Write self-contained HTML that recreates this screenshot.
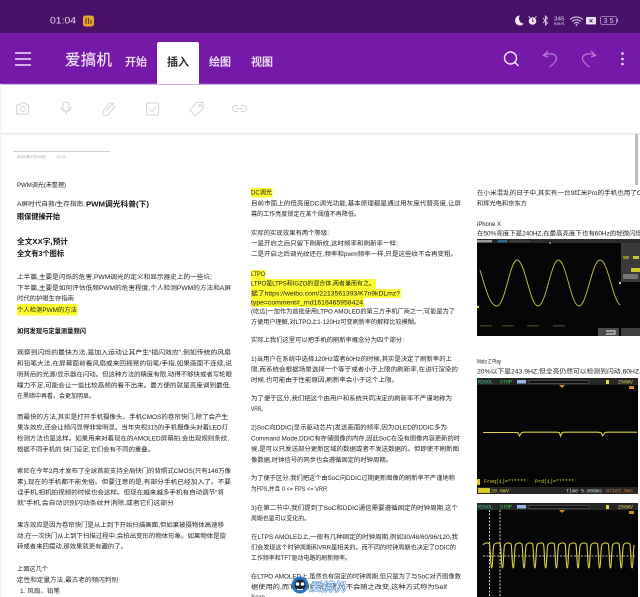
<!DOCTYPE html>
<html lang="zh"><head><meta charset="utf-8"><title>爱搞机</title>
<style>
html,body{margin:0;padding:0;background:#fff;width:640px;height:597px;overflow:hidden}
svg{display:block;font-family:"Liberation Sans","Noto Sans CJK SC",sans-serif}
.t text{font-size:6.1px;fill:#1c1c1c}
.t .b{font-size:7.2px;font-weight:700;fill:#111}
.t{filter:blur(.25px)}
.s text{font-size:5px;font-family:"Liberation Mono","Noto Sans CJK SC",monospace}
.h{stroke:currentColor;stroke-width:.15px}
</style></head><body>
<svg width="640" height="597" viewBox="0 0 640 597" xmlns="http://www.w3.org/2000/svg">
<rect width="640" height="597" fill="#fff"/>
<!-- header -->
<rect width="640" height="33" fill="#4a1168"/>
<rect y="33" width="640" height="51" fill="#7519a8"/>
<rect y="83.5" width="640" height="1" fill="#a45cd0"/>
<path d="M157 84V44q0-2 2-2h38q2 0 2 2v40z" fill="#fff"/>
<text x="50" y="23.5" font-size="9.5" fill="#eadcf2" textLength="26" lengthAdjust="spacingAndGlyphs">01:04</text>
<rect x="83" y="15.5" width="11" height="11" rx="2.5" fill="#e9a532"/>
<path d="M86 18v6M88.5 18v6M91 20v4" stroke="#6a4410" stroke-width="1.2" fill="none"/>
<!-- status right -->
<path d="M520 15.500a5 5 0 1 0 4 8a5 5 0 0 1-4-8z" fill="#f0e6f5"/>
<circle cx="532.500" cy="21" r="3.800" fill="#f0e6f5"/><path d="M532.500 18.800v2.400h1.500" stroke="#4a1168" stroke-width=".8" fill="none"/><path d="M528.500 16.500l1.500 1M536.500 16.500l-1.500 1" stroke="#f0e6f5" stroke-width="1"/>
<path d="M543 18l4.500 5-2 2v-9l2 2-4.500 5" stroke="#e6d8ee" stroke-width=".9" fill="none"/>
<text x="554" y="20.500" font-size="5.600" fill="#e6d8ee" textLength="10.500" lengthAdjust="spacingAndGlyphs">345</text>
<text x="554" y="25" font-size="3.800" fill="#e6d8ee" textLength="10.500" lengthAdjust="spacingAndGlyphs">KB/S</text>
<path d="M570 19.500q6.500-5 13 0M572 21.500q4.500-3.500 9 0M574 23.500q2.500-2 5 0" stroke="#e6d8ee" stroke-width="1" fill="none"/><circle cx="576.500" cy="25" r=".9" fill="#e6d8ee"/>
<rect x="586" y="17" width="10" height="7.500" rx="1" fill="#ece2f2"/><path d="M589.500 19.300l3 3M592.500 19.300l-3 3" stroke="#4a1168" stroke-width=".9"/>
<rect x="600.500" y="16.500" width="16" height="8" rx="2" fill="none" stroke="#b79cc8" stroke-width=".8"/><rect x="617" y="19" width="1" height="3" fill="#b79cc8"/>
<text x="603.500" y="23" font-size="7" fill="#ddccea" textLength="10">35</text>
<!-- toolbar -->
<path d="M15 53h16M15 59h16M15 65h16" stroke="#f0e4f6" stroke-width="1.500"/>
<text class="h" x="65" y="65" font-size="15.500" fill="#f2e8f7" color="#f2e8f7" textLength="47">爱搞机</text>
<text class="h" x="125" y="65.300" font-size="11" fill="#efe3f6" color="#efe3f6" font-weight="500">开始</text>
<text class="h" x="167" y="65.300" font-size="11" fill="#222" color="#222" font-weight="500">插入</text>
<text class="h" x="209" y="65.300" font-size="11" fill="#efe3f6" color="#efe3f6" font-weight="500">绘图</text>
<text class="h" x="251" y="65.300" font-size="11" fill="#efe3f6" color="#efe3f6" font-weight="500">视图</text>
<circle cx="510.500" cy="58" r="6" fill="none" stroke="#f5edf9" stroke-width="1.400"/><path d="M515 62.500l3.500 3.500" stroke="#f5edf9" stroke-width="1.500"/>
<path d="M548 51l-4.500 4.500 4.500 1.500M544 55.500c5-3 12-2 12.500 2.500c.3 3-3 6-7 9" fill="none" stroke="#b678d6" stroke-width="1.300"/>
<path d="M591 51l4.500 4.500-4.500 1.500M595 55.500c-5-3-12-2-12.500 2.500c-.3 3 3 6 7 9" fill="none" stroke="#b678d6" stroke-width="1.300"/>
<circle cx="622.500" cy="53.500" r="1.300" fill="#f0e4f6"/><circle cx="622.500" cy="59" r="1.300" fill="#f0e4f6"/><circle cx="622.500" cy="64" r="1.300" fill="#f0e4f6"/>
<!-- insert bar -->
<rect y="133" width="640" height="1.500" fill="#e9e9e9"/>
<rect x="0" y="84" width="1.500" height="513" fill="#f3f3f3"/>
<g fill="none" stroke="#d6d6d6" stroke-width="1.100">
<path d="M17 105h3l1.500-2h4l1.500 2h1.500v9h-12z"/><circle cx="23" cy="109" r="2.500"/>
<rect x="63" y="102" width="6" height="9" rx="3"/><path d="M61 107c0 6 10 6 10 0M66 112v2.500"/>
<path d="M114 104c-2-2-4-1-5 0l-5 6c-2 2-1 4 0 5s3 1 4.500-.5l5-6c1-1 1-2 0-3s-2-.5-3 .5l-4 5"/>
<rect x="146.500" y="103" width="12" height="12" rx="1"/><path d="M149.500 109l2.500 2.500 4-4.500"/>
<path d="M197 102.500h6v6l-7.500 7.500-6-6z"/><circle cx="200" cy="105.500" r="1"/>
<path d="M238 105.500h-2.500a3 3 0 0 0 0 6h2.500M241 105.500h2.500a3 3 0 0 1 0 6h-2.500M236.500 108.500h6.500"/>
</g>
<rect x="635" y="134" width="3" height="51" fill="#bdbdbd"/>
<!-- doc head -->
<rect x="13" y="151" width="97" height=".7" fill="#bbb"/>
<text x="17" y="158" font-size="3.500" fill="#999" textLength="29" lengthAdjust="spacingAndGlyphs">2020年7月10日</text>
<text x="56" y="158" font-size="3.500" fill="#aaa" textLength="10" lengthAdjust="spacingAndGlyphs">10:31</text>
<!-- highlights -->
<g fill="#fdfb2f">
<rect x="17" y="304" width="60.500" height="11.500"/>
<rect x="251" y="188" width="21.500" height="9.500"/>
<rect x="251" y="270" width="14.500" height="9"/>
<rect x="251" y="279" width="125" height="10"/>
<rect x="251" y="289" width="150" height="9"/>
<rect x="251" y="298" width="113" height="9"/>
</g>
<g class="t">
<text x="17" y="187.200" textLength="49" lengthAdjust="spacingAndGlyphs">PWM调光(未整理)</text>
<text x="17" y="206.200" textLength="68" lengthAdjust="spacingAndGlyphs">A屏时代自救/生存指南,</text>
<text class="b" x="86" y="206.600" textLength="63" lengthAdjust="spacingAndGlyphs">PWM调光科普(下)</text>
<text class="b" x="17" y="219.100" textLength="43" lengthAdjust="spacingAndGlyphs">眼保健操开始</text>
<text class="b" x="17" y="244.100" textLength="51" lengthAdjust="spacingAndGlyphs">全文XX字,预计</text>
<text class="b" x="17" y="256.100" textLength="47" lengthAdjust="spacingAndGlyphs">全文有3个图标</text>
<text x="17" y="279.200" textLength="195" lengthAdjust="spacingAndGlyphs">上半篇,主要是闪烁的危害,PWM调光的定义和显示器史上的一些坑;</text>
<text x="17" y="290.200" textLength="214" lengthAdjust="spacingAndGlyphs">下半篇,主要是如何评估低频PWM的危害程度,个人检测PWM的方法和A屏</text>
<text x="17" y="300.700" textLength="57" lengthAdjust="spacingAndGlyphs">时代的护眼生存指南</text>
<text x="17" y="312.200" textLength="60" lengthAdjust="spacingAndGlyphs">个人检测PWM的方法</text>
<text class="b" style="font-size:6.300px" x="17" y="333.200" textLength="69" lengthAdjust="spacingAndGlyphs">如何发现与定量测量频闪</text>
<text x="17" y="354.700" textLength="214" lengthAdjust="spacingAndGlyphs">观察到闪烁的最快方法,是加入运动让其产生“插闪效应”,例如传统的风扇</text>
<text x="17" y="365.700" textLength="215" lengthAdjust="spacingAndGlyphs">和铅笔大法,在屏幕面前看风扇或来回摇晃的铅笔/手指,如果画面不连续,说</text>
<text x="17" y="376.700" textLength="215" lengthAdjust="spacingAndGlyphs">明背后的光源/显示器在闪动。但这种方法的精度有限,动得不够快或者写轮眼</text>
<text x="17" y="387.700" textLength="214" lengthAdjust="spacingAndGlyphs">瞳力不足,可能会让一些比较高频的看不出来。最方便的就是亮度调到最低,</text>
<text x="17" y="398.200" textLength="78" lengthAdjust="spacingAndGlyphs">在黑暗中再看。会更加明显。</text>
<text x="17" y="419.200" textLength="211" lengthAdjust="spacingAndGlyphs">而最快的方法,其实是打开手机摄像头。手机CMOS的卷帘快门,除了会产生</text>
<text x="17" y="429.700" textLength="211" lengthAdjust="spacingAndGlyphs">果冻效应,还会让频闪显得非常明显。当年央视315的手机摄像头对着LED灯</text>
<text x="17" y="440.700" textLength="212" lengthAdjust="spacingAndGlyphs">检测方法也是这样。如果用来对着现在的AMOLED屏幕拍,会出现规则条纹,</text>
<text x="17" y="451.700" textLength="137" lengthAdjust="spacingAndGlyphs">根据不同手机的 快门设定,它们会有不同的重叠。</text>
<text x="17" y="473.200" textLength="214" lengthAdjust="spacingAndGlyphs">索尼在今年2月才发布了全球首款支持全局快门的背照式CMOS(只有146万像</text>
<text x="17" y="484.200" textLength="214" lengthAdjust="spacingAndGlyphs">素),现在的手机都不能免俗。但要注意的是,有部分手机已经加入了。不要</text>
<text x="17" y="494.700" textLength="207" lengthAdjust="spacingAndGlyphs">误手机,相机拍视频的时候也会这样。但现在越来越多手机有自动调节“将</text>
<text x="17" y="505.200" textLength="157" lengthAdjust="spacingAndGlyphs">就”手机,会自动识别闪动条纹并消除,或者它们这部分</text>
<text x="17" y="527.200" textLength="207" lengthAdjust="spacingAndGlyphs">果冻效应是因为卷帘快门是从上到下开始扫描画面,但如果被摄物体高速移</text>
<text x="17" y="538.200" textLength="209" lengthAdjust="spacingAndGlyphs">动,在一次快门从上到下扫描过程中,会拍出变形的物体形象。如果物体是旋</text>
<text x="17" y="548.700" textLength="110" lengthAdjust="spacingAndGlyphs">转或者来回摆动,那效果就更有趣的了。</text>
<text x="17" y="571.200" textLength="31" lengthAdjust="spacingAndGlyphs">上面这几个</text>
<text x="17" y="582.200" textLength="101" lengthAdjust="spacingAndGlyphs">定性和定量方法,最古老的频闪判别</text>
<text x="20" y="593.200" textLength="40" lengthAdjust="spacingAndGlyphs">1. 风扇、铅笔</text>

<text x="251" y="194.700" textLength="21" lengthAdjust="spacingAndGlyphs">DC调光</text>
<text x="251" y="205.700" textLength="210" lengthAdjust="spacingAndGlyphs">目前市面上的低亮度DC调光功能,基本原理都是通过用灰度代替亮度,让屏</text>
<text x="251" y="216.200" textLength="109" lengthAdjust="spacingAndGlyphs">幕的工作亮度锁定在某个阈值不再降低。</text>
<text x="251" y="235.200" textLength="78" lengthAdjust="spacingAndGlyphs">实际的实现效果有两个等级:</text>
<text x="251" y="245.700" textLength="147" lengthAdjust="spacingAndGlyphs">一是开启之后只留下刷新纹,这时频率和刷新率一样;</text>
<text x="251" y="256.200" textLength="206" lengthAdjust="spacingAndGlyphs">二是开启之后调光纹还在,频率和pwm频率一样,只是这些纹不会再变粗。</text>
<text x="251" y="276.200" textLength="14" lengthAdjust="spacingAndGlyphs">LTPO</text>
<text x="251" y="285.700" textLength="124" lengthAdjust="spacingAndGlyphs">LTPO是LTPS和IGZO的混合体,两者兼而有之。</text>
<text x="251" y="295.700" textLength="149" lengthAdjust="spacingAndGlyphs">据了https://weibo.com/2213561393/K7n9kDLmz?</text>
<text x="251" y="304.700" textLength="112" lengthAdjust="spacingAndGlyphs">type=comment#_rnd1616465958424</text>
<text x="251" y="313.700" textLength="204" lengthAdjust="spacingAndGlyphs">(吃瓜)一加作为首批使用LTPO AMOLED的第三方手机厂商之一,可能是为了</text>
<text x="251" y="324.200" textLength="169" lengthAdjust="spacingAndGlyphs">方便用户理解,对LTPO上1-120Hz可变刷新率的解释比较模糊。</text>
<text x="251" y="342.200" textLength="153" lengthAdjust="spacingAndGlyphs">实际上我们这里可以把手机的刷新率概念分为四个部分:</text>
<text x="251" y="361.200" textLength="201" lengthAdjust="spacingAndGlyphs">1)当用户在系统中选择120Hz或者60Hz的时候,其实是决定了刷新率的上</text>
<text x="251" y="371.700" textLength="207" lengthAdjust="spacingAndGlyphs">限,而系统会根据场景选择一个等于或者小于上限的刷新率,在进行渲染的</text>
<text x="251" y="382.200" textLength="147" lengthAdjust="spacingAndGlyphs">时候,也可能由于性能原因,刷新率会小于这个上限。</text>
<text x="251" y="400.700" textLength="201" lengthAdjust="spacingAndGlyphs">为了便于区分,我们把这个由用户和系统共同决定的刷新率不严谨地称为</text>
<text x="251" y="411.200" textLength="15" lengthAdjust="spacingAndGlyphs">VRR。</text>
<text x="251" y="429.700" textLength="196" lengthAdjust="spacingAndGlyphs">2)SoC向DDIC(显示驱动芯片)发送画面的频率,因为OLED的DDIC多为</text>
<text x="251" y="440.700" textLength="209" lengthAdjust="spacingAndGlyphs">Command Mode,DDIC有存储图像的内存,因此SoC在没有图像内容更新的时</text>
<text x="251" y="451.200" textLength="208" lengthAdjust="spacingAndGlyphs">候,是可以只发送部分更新区域的数据或者不发送数据的。但即使不刷新图</text>
<text x="251" y="462.200" textLength="141" lengthAdjust="spacingAndGlyphs">像数据,时钟信号的同步也会遵循固定的时钟周期。</text>
<text x="251" y="480.200" textLength="204" lengthAdjust="spacingAndGlyphs">为了便于区分,我们把这个由SoC向DDIC过期更新图像的刷新率不严谨地称</text>
<text x="251" y="491.200" textLength="76" lengthAdjust="spacingAndGlyphs">为FPS,并且 0 &lt;= FPS &lt;= VRR</text>
<text x="251" y="510.200" textLength="207" lengthAdjust="spacingAndGlyphs">3)在第二节中,我们提到了SoC和DDIC通信需要遵循固定的时钟周期,这个</text>
<text x="251" y="520.700" textLength="59" lengthAdjust="spacingAndGlyphs">周期也是可以变化的。</text>
<text x="251" y="539.200" textLength="207" lengthAdjust="spacingAndGlyphs">在LTPS AMOLED上,一般有几种固定的时钟周期,例如30/48/60/96/120,我</text>
<text x="251" y="549.700" textLength="205" lengthAdjust="spacingAndGlyphs">们会发现这个时钟周期和VRR是相关的。而不同的时钟周期也决定了DDIC的</text>
<text x="251" y="560.200" textLength="100" lengthAdjust="spacingAndGlyphs">工作频率和TFT驱动电路的刷新频率。</text>
<text x="251" y="578.700" textLength="210" lengthAdjust="spacingAndGlyphs">在LTPO AMOLED上,虽然也有固定的时钟周期,但只是为了与SoC对齐图像数</text>
<text x="251" y="589.200" textLength="196" lengthAdjust="spacingAndGlyphs">据使用的,而TFT的刷新频率并不会随之改变,这种方式称为Self</text>
<text x="251" y="599" textLength="14" lengthAdjust="spacingAndGlyphs">Scan</text>

<text x="477" y="195.200" textLength="165" lengthAdjust="spacingAndGlyphs">在小米混乱的日子中,其实有一台9红米Pro的手机也用了O</text>
<text x="477" y="205.700" textLength="50" lengthAdjust="spacingAndGlyphs">和辉光电和京东方</text>
<text x="477" y="226.200" textLength="24" lengthAdjust="spacingAndGlyphs">iPhone X</text>
<text x="477" y="235.700" textLength="165" lengthAdjust="spacingAndGlyphs">在50%亮度下是240HZ,在最高亮度下也有60Hz的轻微闪烁</text>
<text x="477" y="363.700" textLength="24" lengthAdjust="spacingAndGlyphs">Moto Z Play</text>
<text x="477" y="373.700" textLength="164" lengthAdjust="spacingAndGlyphs">20%以下是243.9HZ,但全亮仍然可以检测到闪动,60HZ,</text>
</g>
<!-- scope 1 -->
<rect x="477" y="239" width="163" height="97" fill="#050505"/>
<rect x="477" y="239" width="163" height="4" fill="#2c2c2c"/>
<rect x="477" y="240" width="15" height="2.500" fill="#999"/><rect x="498" y="240" width="9" height="2.500" fill="#2d6f9c"/>
<rect x="510" y="240.500" width="20" height="1.500" fill="#444"/>
<rect x="621" y="243" width="19" height="39" fill="#3a3a3a"/>
<rect x="631" y="268" width="9" height="4" fill="#c9c52a"/><rect x="623" y="256" width="6" height="3" fill="#8b8a2a"/><rect x="633" y="256" width="6" height="3" fill="#c9c52a"/>
<rect x="623" y="274" width="15" height="5" fill="#777"/>
<rect x="598" y="328" width="21" height="8" fill="#4b4b4b"/><rect x="621" y="328" width="19" height="8" fill="#3e3e3e"/>
<path d="M606 331h9v3h-9" stroke="#eee" fill="none" stroke-width=".9"/>
<rect x="480" y="325" width="12" height="1.500" fill="#3a3a20"/><rect x="502" y="325" width="12" height="1.500" fill="#3a3a20"/><rect x="527" y="325" width="12" height="1.500" fill="#3a3a20"/><rect x="553" y="325" width="12" height="1.500" fill="#3a3a20"/>
<path d="M480 270C486 290 490 306 497 306C505 306 510 260 517 260C525 260 530 306 538 306C546 306 551 260 558.500 260C566 260 571 306 579 306C587 306 592 260 600 260C608 260 612 298 620 305" fill="none" stroke="#c9c650" stroke-width=".9"/>
<circle cx="620" cy="283" r="1.200" fill="#e8d96a"/><circle cx="478" cy="307" r="1.200" fill="#d8d45a"/><circle cx="550" cy="243" r="1" fill="#6aa6d8"/>
<!-- scope 2 -->
<rect x="477" y="378" width="161" height="116" fill="#060606"/>
<rect x="477" y="378" width="161" height="7" fill="#262626"/>
<rect x="477" y="487" width="161" height="7" fill="#262626"/>
<g class="s">
<text x="478" y="383.500" fill="#43c8a0">R2GOL</text><text x="500" y="383.500" fill="#3fd04a">STOP</text>
<rect x="517" y="380" width="9" height="3.500" fill="#9bb8ea"/>
<rect x="529" y="380.500" width="60" height="3" fill="#111" stroke="#888" stroke-width=".4"/>
<rect x="606" y="380" width="3" height="4" fill="#e6d84a"/>
<text x="618" y="383.500" fill="#e6d84a">256mV</text>
<text x="484" y="483" fill="#d9d43a">Freq(1)=******</text><text x="535" y="483" fill="#d9d43a">Prd(1)=******</text>
<rect x="478" y="488" width="12" height="5" fill="#d9c82a"/>
<text x="491" y="492.500" fill="#d9d43a">20.0mV</text>
<text x="566" y="492.500" fill="#ddd">Time 5.000ms</text><text x="606" y="492.500" fill="#e07a3a">0=163.0ms</text>
</g>
<rect x="629" y="386" width="5" height="3" fill="#d08a2a"/>
<path d="M559 385l3 3 3-3z" fill="#e08a2a"/>
<path d="M483 432.500h32l3 .2 1.500 3.300 2-3.300 2-.5h34l2 .5 1 3.500 1.500-3.500 2-.5h34l3 .5 1.500 3 2.500-3 2-.5h30" fill="none" stroke="#dcd645" stroke-width="1.100"/>
<path d="M477 479h3v6h-3z" fill="#d9c82a"/>
<!-- scope 3 -->
<rect x="477" y="503" width="161" height="94" fill="#060606"/>
<rect x="477" y="503" width="161" height="7" fill="#262626"/>
<g class="s">
<text x="478" y="508.500" fill="#43c8a0">R2GOL</text><text x="500" y="508.500" fill="#3fd04a">STOP</text>
<rect x="517" y="505" width="9" height="3.500" fill="#9bb8ea"/>
<rect x="529" y="505.500" width="60" height="3" fill="#111" stroke="#888" stroke-width=".4"/>
<rect x="606" y="505" width="3" height="4" fill="#e6d84a"/>
<text x="618" y="508.500" fill="#e6d84a">256mV</text>
</g>
<rect x="629" y="511" width="5" height="3" fill="#d08a2a"/>
<path d="M559 510l3 3 3-3z" fill="#e08a2a"/>
<path d="M489.500 510v87M500 510v87" stroke="#d8d8c8" stroke-width="1" stroke-dasharray="2 1.500"/>
<path d="M483 556h152" stroke="#bdbdb0" stroke-width="1" stroke-dasharray="2 1.500"/>
<path d="M483 545c1-2 5-3 6.500-1c1 5 1 24 2.200 24c1 0 1-19 2.100-23c1-2 5-3 6.500-1c1 5 1 24 2.200 24c1 0 1-19 2.100-23c1-2 5-3 6.500-1c1 5 1 24 2.200 24c1 0 1-19 2.100-23c1-2 5-3 6.500-1c1 5 1 24 2.200 24c1 0 1-19 2.100-23c1-2 5-3 6.500-1c1 5 1 24 2.200 24c1 0 1-19 2.100-23c1-2 5-3 6.500-1c1 5 1 24 2.200 24c1 0 1-19 2.100-23c1-2 5-3 6.500-1c1 5 1 24 2.200 24c1 0 1-19 2.100-23c1-2 5-3 6.500-1c1 5 1 24 2.200 24c1 0 1-19 2.100-23c1-2 5-3 6.500-1c1 5 1 24 2.200 24c1 0 1-19 2.100-23c1-2 5-3 6.500-1c1 5 1 24 2.200 24c1 0 1-19 2.100-23c1-2 5-3 6.500-1c1 5 1 24 2.200 24c1 0 1-19 2.100-23c1-2 5-3 6.500-1c1 5 1 24 2.200 24c1 0 1-19 2.100-23c1-2 5-3 6.500-1c1 5 1 24 2.200 24c1 0 1-19 2.100-23c1-2 5-3 6.500-1c1 5 1 24 2.200 24c1 0 1-19 2.100-23" fill="none" stroke="#d8d24a" stroke-width="1.100"/>
<!-- watermark -->
<circle cx="300" cy="585" r="8.500" fill="#2a78c4"/>
<circle cx="300" cy="585" r="5.500" fill="#1c2430"/>
<circle cx="297.500" cy="584" r="1.800" fill="#fff"/><circle cx="302.500" cy="584" r="1.800" fill="#fff"/>
<path d="M297 589q3 1.500 6 0" stroke="#fff" stroke-width="1" fill="none"/>
<text x="309" y="591" font-size="12" font-style="italic" fill="#fff" stroke="#3a82c8" stroke-width="1" paint-order="stroke" textLength="36" lengthAdjust="spacingAndGlyphs">爱搞机</text>
</svg>
</body></html>
